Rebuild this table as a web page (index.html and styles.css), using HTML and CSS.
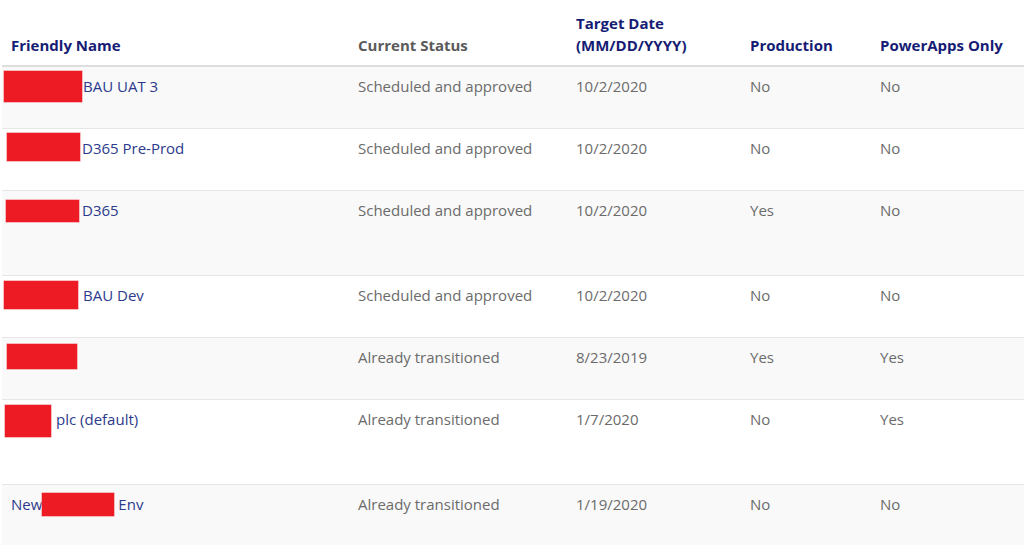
FILE: index.html
```html
<!DOCTYPE html>
<html>
<head>
<meta charset="utf-8">
<link rel="stylesheet" href="styles.css">
</head>
<body>
<div class="grid">
  <div class="row head">
    <div class="cell">Friendly Name</div>
    <div class="cell muted-head">Current Status</div>
    <div class="cell">Target Date<br>(MM/DD/YYYY)</div>
    <div class="cell">Production</div>
    <div class="cell">PowerApps Only</div>
  </div>

  <div class="row alt">
    <div class="cell name"><span class="redact r1"></span><span class="txt">BAU UAT 3</span></div>
    <div class="cell">Scheduled and approved</div>
    <div class="cell">10/2/2020</div>
    <div class="cell">No</div>
    <div class="cell">No</div>
  </div>

  <div class="row">
    <div class="cell name"><span class="redact r2"></span><span class="txt">D365 Pre-Prod</span></div>
    <div class="cell">Scheduled and approved</div>
    <div class="cell">10/2/2020</div>
    <div class="cell">No</div>
    <div class="cell">No</div>
  </div>

  <div class="row alt tall">
    <div class="cell name"><span class="redact r3"></span><span class="txt">D365</span></div>
    <div class="cell">Scheduled and approved</div>
    <div class="cell">10/2/2020</div>
    <div class="cell">Yes</div>
    <div class="cell">No</div>
  </div>

  <div class="row">
    <div class="cell name"><span class="redact r4"></span><span class="txt">BAU Dev</span></div>
    <div class="cell">Scheduled and approved</div>
    <div class="cell">10/2/2020</div>
    <div class="cell">No</div>
    <div class="cell">No</div>
  </div>

  <div class="row alt">
    <div class="cell name"><span class="redact r5"></span></div>
    <div class="cell">Already transitioned</div>
    <div class="cell">8/23/2019</div>
    <div class="cell">Yes</div>
    <div class="cell">Yes</div>
  </div>

  <div class="row tall">
    <div class="cell name"><span class="redact r6"></span><span class="txt">plc (default)</span></div>
    <div class="cell">Already transitioned</div>
    <div class="cell">1/7/2020</div>
    <div class="cell">No</div>
    <div class="cell">Yes</div>
  </div>

  <div class="row alt last">
    <div class="cell name"><span class="txt">New</span><span class="redact r7"></span><span class="txt after">Env</span></div>
    <div class="cell">Already transitioned</div>
    <div class="cell">1/19/2020</div>
    <div class="cell">No</div>
    <div class="cell">No</div>
  </div>
</div>
</body>
</html>
```

FILE: styles.css
```css
html, body {
  margin: 0;
  padding: 0;
  background: #ffffff;
}

body {
  font-family: "Open Sans", "Liberation Sans", sans-serif;
  font-size: 15px;
  line-height: 22px;
  color: #6b6b6b;
  overflow: hidden;
}

.grid {
  margin-left: 2px;
}

.row {
  display: grid;
  grid-template-columns: 347px 218px 174px 130px 1fr;
  height: 61px;
  border-bottom: 1px solid #e6e6e6;
  background: #ffffff;
}

.row.alt {
  background: #f9f9f9;
}

.row.tall {
  height: 84px;
}

.row.last {
  height: 70px;
  border-bottom: none;
}

.row.head {
  height: 65px;
  border-bottom: 2px solid #dedede;
  align-items: end;
  background: #ffffff;
}

.head .cell {
  font-weight: 700;
  color: #161c74;
  padding-top: 0;
  padding-bottom: 9px;
}

.head .muted-head {
  color: #5a5a5a;
}

.cell {
  padding: 8px 0 0 9px;
}

.name {
  display: flex;
  align-items: flex-start;
  color: #2c3a8c;
}

.redact {
  display: block;
  flex: none;
  background: #ed1c24;
  box-shadow: 0 0 0 0.5px #f27a7e;
}

.r1 { width: 78px; height: 31px; margin: -4px 1px 0 -7px; }
.r2 { width: 73px; height: 28px; margin: -4px 2px 0 -4px; }
.r3 { width: 73px; height: 22px; margin: 1px 3px 0 -5px; }
.r4 { width: 74px; height: 28px; margin: -3px 5px 0 -7px; }
.r5 { width: 70px; height: 25px; margin: -2px 0 0 -4px; }
.r6 { width: 46px; height: 32px; margin: -3px 5px 0 -6px; }
.r7 { width: 72px; height: 23px; margin: 0 4px 0 0; }

.txt {
  white-space: nowrap;
}
```
